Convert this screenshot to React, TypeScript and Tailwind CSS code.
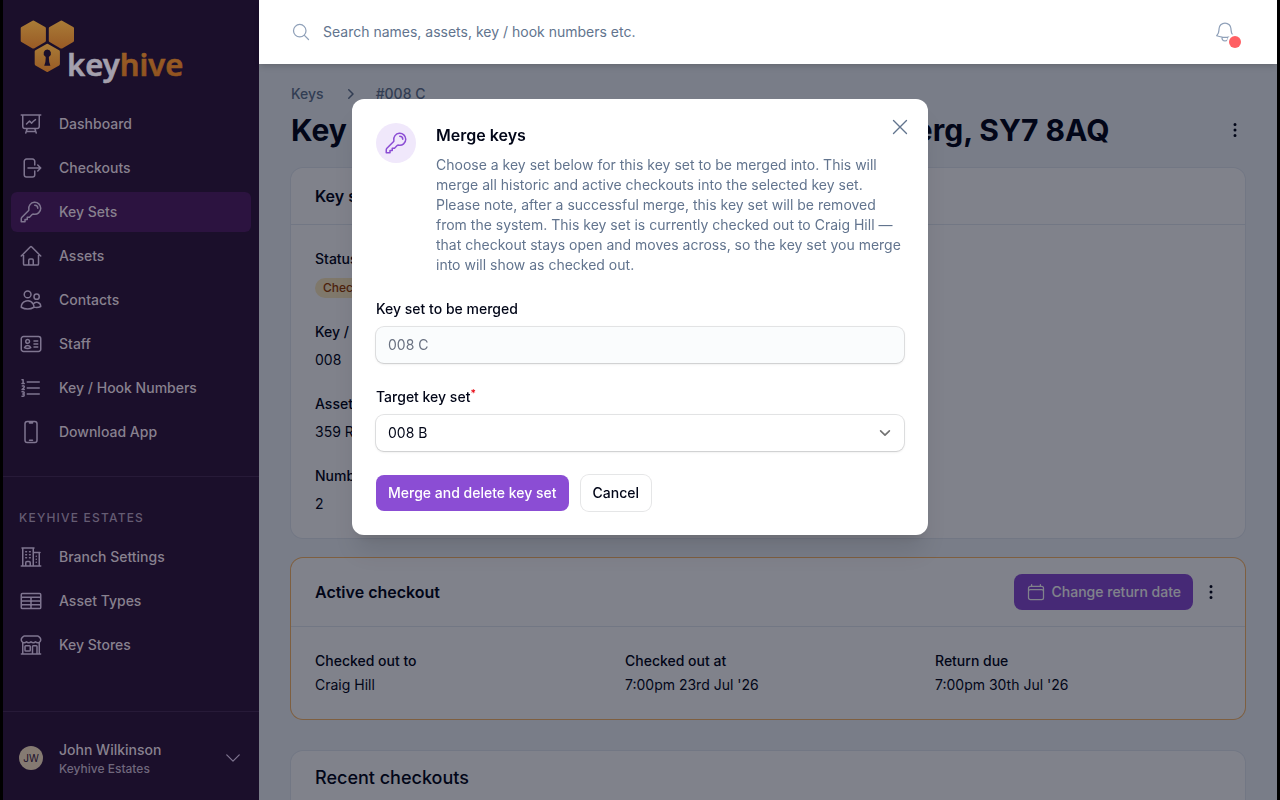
import type { ReactNode } from "react";
import type { IconType } from "react-icons";
import {
  HiMiniChevronRight,
  HiMiniEllipsisVertical,
  HiOutlineArrowRightOnRectangle,
  HiOutlineBell,
  HiOutlineBuildingOffice2,
  HiOutlineBuildingStorefront,
  HiOutlineCalendar,
  HiOutlineChevronDown,
  HiOutlineDevicePhoneMobile,
  HiOutlineHome,
  HiOutlineIdentification,
  HiOutlineKey,
  HiOutlineMagnifyingGlass,
  HiOutlineNumberedList,
  HiOutlinePresentationChartLine,
  HiOutlineTableCells,
  HiOutlineUsers,
  HiOutlineXMark,
} from "react-icons/hi2";

type NavItem = { label: string; icon: IconType; active?: boolean };

const mainNav: NavItem[] = [
  { label: "Dashboard", icon: HiOutlinePresentationChartLine },
  { label: "Checkouts", icon: HiOutlineArrowRightOnRectangle },
  { label: "Key Sets", icon: HiOutlineKey, active: true },
  { label: "Assets", icon: HiOutlineHome },
  { label: "Contacts", icon: HiOutlineUsers },
  { label: "Staff", icon: HiOutlineIdentification },
  { label: "Key / Hook Numbers", icon: HiOutlineNumberedList },
  { label: "Download App", icon: HiOutlineDevicePhoneMobile },
];

const branchNav: NavItem[] = [
  { label: "Branch Settings", icon: HiOutlineBuildingOffice2 },
  { label: "Asset Types", icon: HiOutlineTableCells },
  { label: "Key Stores", icon: HiOutlineBuildingStorefront },
];

function Logo() {
  return (
    <svg viewBox="0 0 168 72" className="h-[72px] w-[168px]" role="img" aria-label="keyhive">
      <defs>
        <linearGradient id="comb" x1="0" y1="0" x2="0" y2="1">
          <stop offset="0" stopColor="#a87a36" />
          <stop offset="1" stopColor="#9a5c26" />
        </linearGradient>
        <linearGradient id="hive" x1="0" y1="0" x2="0" y2="1">
          <stop offset="0" stopColor="#9c6228" />
          <stop offset="1" stopColor="#8e501e" />
        </linearGradient>
      </defs>
      <g fill="url(#comb)" stroke="url(#comb)" strokeWidth="3" strokeLinejoin="round">
        <path d="M13.3 6 24.4 12.3V24.8L13.3 31.1 2.2 24.8V12.3Z" />
        <path d="M41.4 6 52.5 12.3V24.8L41.4 31.1 30.3 24.8V12.3Z" />
        <path d="M27.3 29.3 38.4 35.6V48.1L27.3 54.4 16.2 48.1V35.6Z" />
      </g>
      <path
        d="M27.3 33.6a3.7 3.7 0 0 0-2 6.8c.5.4.5.9.4 1.5l-.3 4-1.2 3.8h6.2l-1.2-3.8-.3-4c-.1-.6-.1-1.1.4-1.5a3.7 3.7 0 0 0-2-6.8Z"
        fill="#1b0f2b"
      />
      <text
        x="47"
        y="60"
        fontFamily="'Noto Sans', sans-serif"
        fontSize="31"
        fontWeight="600"
        fill="#a4a0ad"
        stroke="#a4a0ad"
        strokeWidth="0.6"
      >
        key
        <tspan fill="url(#hive)" stroke="url(#hive)">
          hive
        </tspan>
      </text>
    </svg>
  );
}

function NavList({ items }: { items: NavItem[] }) {
  return (
    <ul className="flex flex-col gap-1 px-2">
      {items.map(({ label, icon: Icon, active }) => (
        <li key={label}>
          <a
            href="#"
            className={`flex h-10 items-center gap-4 rounded-md px-2 text-sm font-medium text-[#88818f] ${
              active ? "bg-[#2c1340]" : ""
            }`}
          >
            <Icon className="size-6 text-[#7f7590]" />
            {label}
          </a>
        </li>
      ))}
    </ul>
  );
}

function Sidebar() {
  return (
    <aside className="flex w-64 shrink-0 flex-col bg-[#1b0f2b]">
      <div className="px-[17px] pt-4 pb-4">
        <Logo />
      </div>
      <nav className="flex flex-1 flex-col">
        <NavList items={mainNav} />
        <div className="mt-6 border-t border-[#271a38] pt-8">
          <h2 className="px-4 pt-px pb-[11px] text-xs leading-4 font-medium tracking-widest text-[#655c73]">
            KEYHIVE ESTATES
          </h2>
          <NavList items={branchNav} />
        </div>
      </nav>
      <button
        type="button"
        className="flex h-[89px] items-center gap-4 border-t border-[#271a38] px-4 pt-1 text-left"
      >
        <span className="grid size-6 place-items-center rounded-full bg-[#857a72] text-[10px] text-[#1b0f2b]">
          JW
        </span>
        <span className="flex-1 pt-0.5">
          <span className="block text-sm font-medium text-[#88818f]">John Wilkinson</span>
          <span className="block text-xs leading-[18px] font-medium text-[#6f677c]">
            Keyhive Estates
          </span>
        </span>
        <HiOutlineChevronDown className="size-5 text-[#7f7590]" />
      </button>
    </aside>
  );
}

function Topbar() {
  return (
    <header className="relative z-10 flex h-16 items-center gap-3 bg-white px-8 shadow-md">
      <HiOutlineMagnifyingGlass className="size-5 text-slate-400" />
      <input
        type="search"
        aria-label="Search"
        placeholder="Search names, assets, key / hook numbers etc."
        className="min-w-0 flex-1 bg-transparent text-sm placeholder:text-slate-500 focus:outline-none"
      />
      <button type="button" aria-label="Notifications" className="relative mr-2">
        <HiOutlineBell strokeWidth={1.25} className="size-6 text-slate-400" />
        <span className="absolute -right-1 -bottom-1 size-3 rounded-full bg-[#ff5f63] ring-2 ring-white" />
      </button>
    </header>
  );
}

function Field({ label, children }: { label: string; children: ReactNode }) {
  return (
    <div className="flex flex-col gap-2">
      <dt className="font-medium">{label}</dt>
      <dd>{children}</dd>
    </div>
  );
}

function KeySetPage() {
  return (
    <main className="px-8 pt-5 text-sm text-slate-950">
      <nav aria-label="Breadcrumb" className="flex items-center gap-4 font-medium text-slate-500">
        <a href="#">Keys</a>
        <HiMiniChevronRight className="size-5" />
        <a href="#">#008 C</a>
      </nav>
      <div className="mt-2 flex items-center justify-between">
        <h1 className="text-3xl font-bold whitespace-nowrap">
          Key Set #008 C - 359 Rowan Grove, Steinberg, SY7 8AQ
        </h1>
        <button type="button" aria-label="Key set actions">
          <HiMiniEllipsisVertical className="size-5" />
        </button>
      </div>

      <section className="mt-5 rounded-xl bg-white ring-1 ring-slate-200">
        <h2 className="border-b border-slate-200 px-6 py-4 text-base font-semibold">
          Key set details
        </h2>
        <dl className="flex flex-col gap-6 p-6">
          <Field label="Status">
            <span className="inline-flex h-5 items-center rounded-full bg-[#fdeabf] px-2 text-xs font-medium text-amber-800">
              Checked out
            </span>
          </Field>
          <Field label="Key / hook number">008</Field>
          <Field label="Asset">359 Rowan Grove</Field>
          <Field label="Number of keys">2</Field>
        </dl>
      </section>

      <section className="mt-5 rounded-xl bg-white ring-1 ring-[#fbb868]">
        <div className="flex items-center gap-2 border-b border-slate-200 px-6 py-4">
          <h2 className="flex-1 text-base font-semibold">Active checkout</h2>
          <button
            type="button"
            className="flex h-9 items-center gap-1.5 rounded-lg bg-[#8b4dd4] px-3 font-medium text-white"
          >
            <HiOutlineCalendar className="size-5" />
            Change return date
          </button>
          <button type="button" aria-label="Checkout actions">
            <HiMiniEllipsisVertical className="size-5" />
          </button>
        </div>
        <dl className="grid grid-cols-3 gap-6 p-6">
          <div className="flex flex-col gap-1">
            <dt className="font-medium">Checked out to</dt>
            <dd>Craig Hill</dd>
          </div>
          <div className="flex flex-col gap-1">
            <dt className="font-medium">Checked out at</dt>
            <dd>7:00pm 23rd Jul '26</dd>
          </div>
          <div className="flex flex-col gap-1">
            <dt className="font-medium">Return due</dt>
            <dd>7:00pm 30th Jul '26</dd>
          </div>
        </dl>
      </section>

      <section className="mt-8 rounded-xl bg-white ring-1 ring-slate-200">
        <h2 className="px-6 py-3 text-lg leading-[30px] font-medium">Recent checkouts</h2>
        <div className="h-24 border-t border-slate-200" />
      </section>
    </main>
  );
}

function MergeDialog() {
  return (
    <div className="fixed inset-0 z-20 flex items-start justify-center px-4 pt-[99px]">
      <div
        role="dialog"
        aria-modal="true"
        aria-labelledby="merge-title"
        className="relative w-full max-w-xl rounded-xl bg-white p-6 text-sm text-slate-950 shadow-xl"
      >
        <button
          type="button"
          aria-label="Close"
          className="absolute top-[15px] right-[15px] text-slate-500"
        >
          <HiOutlineXMark strokeWidth={1.25} className="size-[26px]" />
        </button>
        <div className="flex gap-5">
          <div className="grid size-10 shrink-0 place-items-center rounded-full bg-[#f0e8fb] text-[#8b4dd4]">
            <HiOutlineKey className="size-6" />
          </div>
          <div>
            <h2 id="merge-title" className="text-base font-semibold">
              Merge keys
            </h2>
            <p className="mt-2 text-slate-500">
              Choose a key set below for this key set to be merged into. This will merge all
              historic and active checkouts into the selected key set. Please note, after a
              successful merge, this key set will be removed from the system. This key set is
              currently checked out to Craig Hill — that checkout stays open and moves across, so
              the key set you merge into will show as checked out.
            </p>
          </div>
        </div>
        <form className="mt-6 flex flex-col gap-6">
          <div className="flex flex-col gap-2">
            <label htmlFor="source" className="font-medium">
              Key set to be merged
            </label>
            <input
              id="source"
              disabled
              defaultValue="008 C"
              className="h-9 rounded-lg bg-[#fafcfd] px-3 pb-px text-gray-500 shadow-sm ring-1 ring-slate-950/10"
            />
          </div>
          <div className="flex flex-col gap-2">
            <label htmlFor="target" className="font-medium">
              Target key set
              <sup className="text-red-600">*</sup>
            </label>
            <div className="relative">
              <select
                id="target"
                className="h-9 w-full appearance-none rounded-lg bg-white px-3 shadow-sm ring-1 ring-slate-950/10"
              >
                <option>008 B</option>
              </select>
              <svg
                viewBox="0 0 20 20"
                fill="none"
                className="pointer-events-none absolute top-[7px] right-2 size-[22px] stroke-neutral-500"
              >
                <path d="m6 8 4 4 4-4" strokeWidth="1.5" strokeLinecap="round" strokeLinejoin="round" />
              </svg>
            </div>
          </div>
          <div className="flex gap-3">
            <button
              type="button"
              className="h-9 rounded-lg bg-[#8b4dd4] px-3 font-medium text-white"
            >
              Merge and delete key set
            </button>
            <button
              type="button"
              className="h-9 rounded-lg bg-white px-3 font-medium ring-1 ring-slate-950/10"
            >
              Cancel
            </button>
          </div>
        </form>
      </div>
    </div>
  );
}

export default function App() {
  return (
    <div className="flex h-screen overflow-hidden bg-black px-[3px] font-['Inter',sans-serif]">
      <Sidebar />
      <div className="flex min-w-0 flex-1 flex-col">
        <Topbar />
        <div className="relative flex-1 overflow-hidden bg-slate-100">
          <KeySetPage />
          <div className="absolute inset-0 bg-slate-950/50" />
        </div>
      </div>
      <MergeDialog />
    </div>
  );
}
